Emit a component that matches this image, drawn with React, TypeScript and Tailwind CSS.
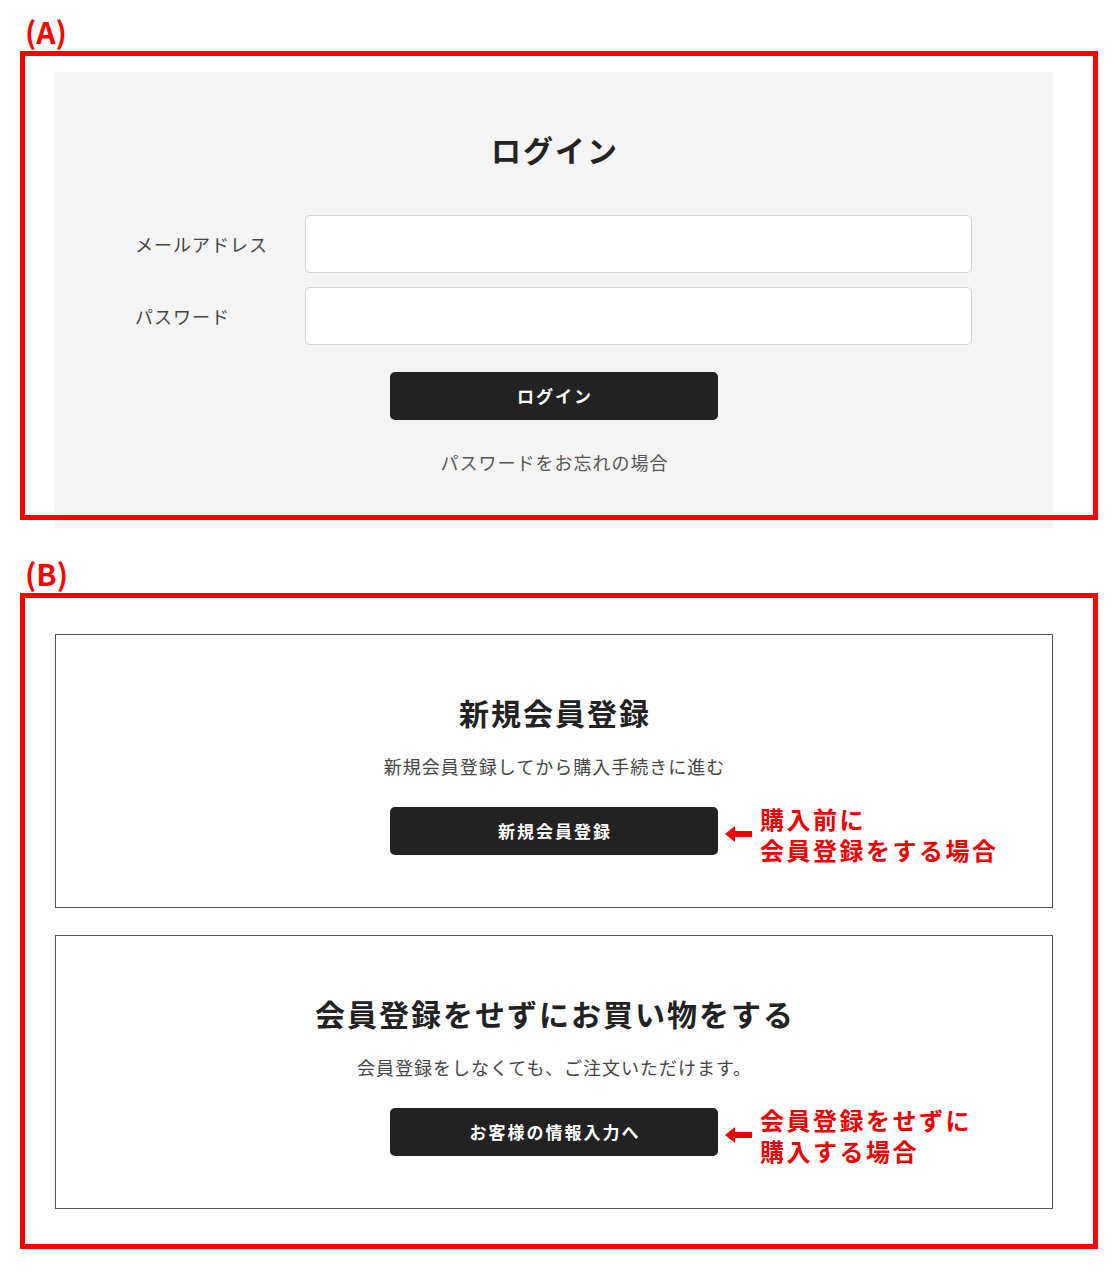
import type React from "react"

const FONT = "font-['Noto_Sans_CJK_JP','Noto_Sans',sans-serif]"

function Arrow() {
  return (
    <svg width="27" height="16" viewBox="0 0 27 16" className="shrink-0">
      <path d="M0 8 L10 0 L10 5 L27 5 L27 11 L10 11 L10 16 Z" fill="#ee0000" />
    </svg>
  )
}

function DarkButton({ children, note }: { children: React.ReactNode; note?: React.ReactNode }) {
  return (
    <div className="relative mx-auto w-[328px]">
      <button
        type="button"
        className="flex h-[48px] w-full items-center justify-center rounded-[5px] bg-[#222] pl-[2px] text-[17px] font-bold tracking-[2px] text-white"
      >
        {children}
      </button>
      {note && (
        <div className="absolute left-full top-[calc(50%+3px)] ml-[7px] flex -translate-y-1/2 items-center gap-[8px] whitespace-nowrap text-left">
          <Arrow />
          <div className="text-[24px] font-bold leading-[31px] tracking-[2.5px] text-[#ee0000]">{note}</div>
        </div>
      )}
    </div>
  )
}

function Field({ label }: { label: string }) {
  return (
    <div className="flex items-center pl-[80px] pr-[81px]">
      <label className="w-[170px] text-[18px] tracking-[1px] text-[#444]">{label}</label>
      <input
        type="text"
        className="h-[58px] flex-1 rounded-[5px] border border-[#d2d2d2] bg-white px-3 outline-none"
      />
    </div>
  )
}

function OptionBox({ title, text, button, note }: { title: string; text: string; button: string; note: React.ReactNode }) {
  return (
    <div className="border border-[#555] bg-white pb-[52px] pt-[55px] text-center">
      <h2 className="pl-[2px] text-[30px] font-bold leading-[45px] tracking-[2px] text-[#222]">{title}</h2>
      <p className="mt-[19px] pl-[1px] text-[18px] leading-[24px] tracking-[1px] text-[#444]">{text}</p>
      <div className="mt-[29px]">
        <DarkButton note={note}>{button}</DarkButton>
      </div>
    </div>
  )
}

export default function App() {
  return (
    <div className={`${FONT} min-h-[1284px] bg-white`}>
      {/* (A) */}
      <div className="pl-[25px] pt-[12px] text-[30px] font-bold leading-[39px] text-[#ff0000]">(A)</div>
      <div className="relative ml-[20px] w-[1078px] pl-[35px] pr-[45px] pt-[21px]">
        <div className="pointer-events-none absolute left-0 top-0 z-10 h-[469px] w-full border-[5px] border-[#ff0000]" />
        <div className="bg-[#f4f4f4] pb-[54px] pt-[55px]">
          <h1 className="pl-[2px] text-center text-[30px] font-bold leading-[45px] tracking-[2px] text-[#222]">ログイン</h1>
          <div className="mt-[43px] flex flex-col gap-[14px]">
            <Field label="メールアドレス" />
            <Field label="パスワード" />
          </div>
          <div className="mt-[27px]">
            <DarkButton>ログイン</DarkButton>
          </div>
          <p className="mt-[30px] pl-[1px] text-center text-[18px] leading-[24px] tracking-[1px] text-[#555]">
            パスワードをお忘れの場合
          </p>
        </div>
      </div>

      {/* (B) */}
      <div className="pl-[25px] pt-[26px] text-[30px] font-bold leading-[39px] text-[#ff0000]">(B)</div>
      <div className="ml-[20px] w-[1078px] border-[5px] border-[#ff0000] pb-[35px] pl-[30px] pr-[40px] pt-[36px]">
        <div className="flex flex-col gap-[27px]">
          <OptionBox
            title="新規会員登録"
            text="新規会員登録してから購入手続きに進む"
            button="新規会員登録"
            note={
              <>
                購入前に
                <br />
                会員登録をする場合
              </>
            }
          />
          <OptionBox
            title="会員登録をせずにお買い物をする"
            text="会員登録をしなくても、ご注文いただけます。"
            button="お客様の情報入力へ"
            note={
              <>
                会員登録をせずに
                <br />
                購入する場合
              </>
            }
          />
        </div>
      </div>
    </div>
  )
}
